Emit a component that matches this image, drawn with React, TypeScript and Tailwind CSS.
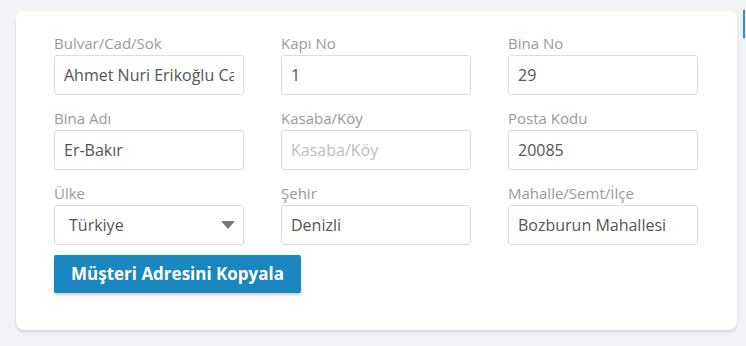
import { ChangeEvent } from 'react';

const rows = [
  [
    { label: 'Bulvar/Cad/Sok', value: 'Ahmet Nuri Erikoğlu Caddesi' },
    { label: 'Kapı No', value: '1' },
    { label: 'Bina No', value: '29' },
  ],
  [
    { label: 'Bina Adı', value: 'Er-Bakır' },
    { label: 'Kasaba/Köy', value: '', placeholder: 'Kasaba/Köy' },
    { label: 'Posta Kodu', value: '20085' },
  ],
];

function Field({ label, value, placeholder }: { label: string; value: string; placeholder?: string }) {
  return (
    <div>
      <label className="block text-[15px] leading-[20px] text-[#9a9a9a] mb-[2px]">{label}</label>
      <input
        type="text"
        defaultValue={value}
        placeholder={placeholder}
        onChange={(e: ChangeEvent<HTMLInputElement>) => e}
        className="block w-full h-[40px] px-[9px] border border-[#dcdcdc] rounded-[3px] bg-white text-[16px] text-[#555] placeholder-[#bdbdbd] outline-none"
      />
    </div>
  );
}

export default function App() {
  return (
    <div className="relative w-[746px] h-[346px] bg-[#f1f3f7] pt-[11px] pl-[16px] font-['Open_Sans',sans-serif]">
      {/* stray scrollbar edge */}
      <div className="absolute right-[1px] top-[10px] w-[2px] h-[28px] bg-[#2a8fd0]" />

      <div className="w-[721px] h-[319px] bg-white rounded-[8px] shadow-[0_2px_3px_rgba(0,0,0,0.12)] pt-[22px] pl-[38px] pr-[39px]">
        <div className="grid grid-cols-3 gap-x-[37px] gap-y-[13px]">
          {rows.flat().map((f) => (
            <Field key={f.label} {...f} />
          ))}

          <div>
            <label className="block text-[15px] leading-[20px] text-[#9a9a9a] mb-[2px]">Ülke</label>
            <div className="relative h-[40px] border border-[#dcdcdc] rounded-[3px] bg-white flex items-center pl-[14px] text-[16px] text-[#555]">
              Türkiye
              <svg className="absolute right-[8px] top-[15px]" width="14" height="8" viewBox="0 0 14 8">
                <path d="M0 0 L14 0 L7 8 Z" fill="#777" />
              </svg>
            </div>
          </div>
          <Field label="Şehir" value="Denizli" />
          <Field label="Mahalle/Semt/İlçe" value="Bozburun Mahallesi" />
        </div>

        <button className="mt-[10px] w-[247px] h-[38px] bg-[#1a87c1] text-white font-bold text-[17px] rounded-[2px] shadow-[0_2px_3px_rgba(0,0,0,0.2)]">
          Müşteri Adresini Kopyala
        </button>
      </div>
    </div>
  );
}
